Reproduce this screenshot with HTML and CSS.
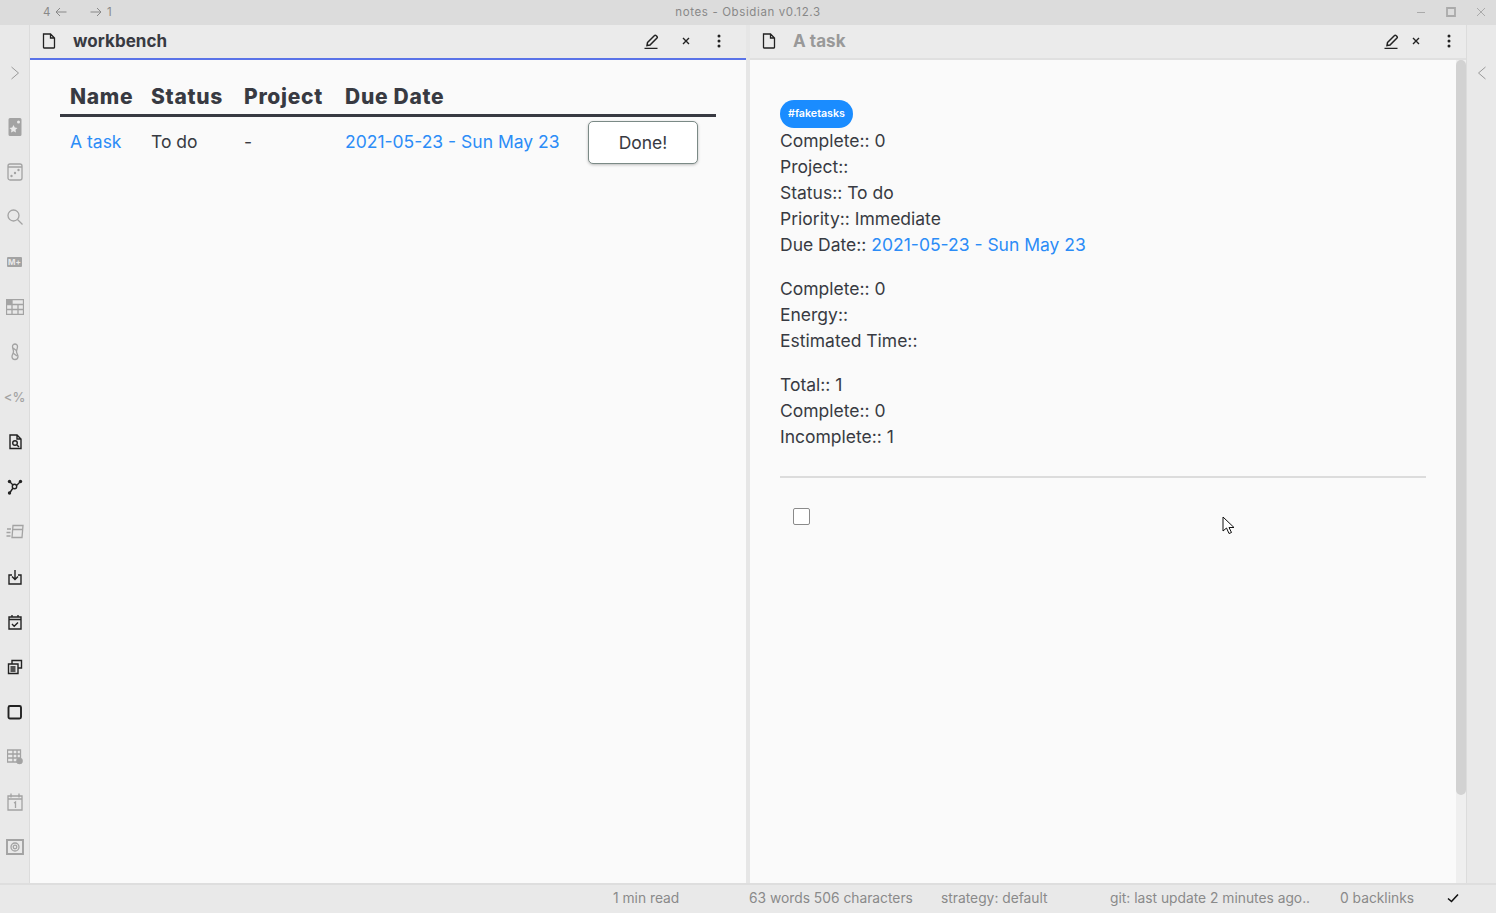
FILE: index.html
```html
<!DOCTYPE html>
<html lang="en">
<head>
<meta charset="utf-8">
<title>notes - Obsidian v0.12.3</title>
<link rel="stylesheet" href="styles.css">
</head>
<body>
<div class="app">
  <header class="titlebar">
    <div class="nav">
      <span class="nav-back">4 <svg class="nav-arrow" viewBox="0 0 12 10"><path d="M11.500 5H1M5 1L1 5l4 4"/></svg></span>
      <span class="nav-fwd"><svg class="nav-arrow" viewBox="0 0 12 10"><path d="M.5 5H11M7 1l4 4-4 4"/></svg> 1</span>
    </div>
    <div class="title">notes - Obsidian v0.12.3</div>
    <div class="win">
      <svg viewBox="0 0 10 10"><path d="M1 5.500h8"/></svg>
      <svg viewBox="0 0 10 10"><path class="thick" d="M1 1h8v8H1z"/></svg>
      <svg viewBox="0 0 10 10"><path d="M1 1l8 8M9 1L1 9"/></svg>
    </div>
  </header>
  <div class="main">
    <nav class="ribbon">
      <svg class="chev" viewBox="0 0 10 14"><path d="M1.500 1l7 6-7 6"/></svg>
      <div class="ribbon-icons">
        <svg class="ri tall g" viewBox="0 0 16 18"><path class="fill" d="M3 0h10a1.500 1.500 0 0 1 1.500 1.500v15A1.500 1.500 0 0 1 13 18H3a1.500 1.500 0 0 1-1.500-1.500v-15A1.500 1.500 0 0 1 3 0z"/><circle cx="11.500" cy="4" r="1.500" fill="#e9e9e9" stroke="none"/><path fill="#e9e9e9" stroke="none" d="M6.500 7l1.300 2.500 2.700.4-2 1.900.5 2.700-2.500-1.300L4 14.500l.5-2.700-2-1.900 2.700-.4z"/></svg>
        <svg class="ri tall g" viewBox="0 0 16 18"><path d="M3 1h10a2 2 0 0 1 2 2v12a2 2 0 0 1-2 2H3a2 2 0 0 1-2-2V3a2 2 0 0 1 2-2zM1 4h14"/><circle class="fill" cx="4.500" cy="13" r="1.200"/><circle class="fill" cx="8" cy="10" r="1.200"/><circle class="fill" cx="11.500" cy="7" r="1.200"/></svg>
        <svg class="ri g" viewBox="0 0 16 16"><circle cx="6.500" cy="6.500" r="5.500"/><path d="M10.500 10.500l5 5"/></svg>
        <span class="ri-chip">M+</span>
        <svg class="ri wide g" viewBox="0 0 18 16"><path d="M.5.500h17v15H.5zM.5 5.500h17M.5 10.500h17M6 .5v15M12 5.500v10"/><path class="fill" d="M.5.500H6v5H.5z"/></svg>
        <svg class="ri tall g" viewBox="0 0 16 18"><path d="M8 1a2.500 2.500 0 0 1 2.500 2.500c0 2-1 3.500-1 5 0 2 1.500 3 1.500 5a3 3 0 0 1-6 0c0-2 1.500-3 1.500-5 0-1.500-1-3-1-5A2.500 2.500 0 0 1 8 1zM6 5l4 3M6 10l4 3"/></svg>
        <span class="ri-text">&lt;%</span>
        <svg class="ri k" viewBox="0 0 16 16"><path d="M3 1h7l4 4v9.500H3zM10 1v4h4"/><circle cx="8" cy="9" r="2.300"/><path d="M10 11l2 2"/></svg>
        <svg class="ri k" viewBox="0 0 16 16"><circle class="fill" cx="2.500" cy="2.500" r="1.700"/><circle class="fill" cx="13.500" cy="2.500" r="1.700"/><circle class="fill" cx="2.500" cy="14" r="1.700"/><circle cx="7.500" cy="7.500" r="2.200"/><path d="M3 3l3 3M13 3L9.500 6.500M3 13.500L6 9"/></svg>
        <svg class="ri wide g" viewBox="0 0 18 16"><path d="M7 1.500h10l-1 12H6zM6.500 5.500h10M1 5h4M.5 8.500h4M.5 12h4"/></svg>
        <svg class="ri k" viewBox="0 0 16 16"><path d="M5 6H2v9h12V6h-3M8 1v9M5 7.500l3 3 3-3"/></svg>
        <svg class="ri k" viewBox="0 0 16 16"><path d="M2 3h12v12H2zM2 5.500h12M5 1v2.500M11 1v2.500M5 10l2.200 2.200L11 8.500"/></svg>
        <svg class="ri k" viewBox="0 0 16 16"><path d="M5 5V1.500h9.500V9H11M1.500 5H11v9.500H1.500zM3.500 8h5M3.500 10h5M3.500 12h5"/></svg>
        <svg class="ri k" viewBox="0 0 16 16"><rect class="thick" x="1.500" y="2" width="12.500" height="12.500" rx="1.500"/></svg>
        <svg class="ri g" viewBox="0 0 16 16"><path d="M.5 1h13v12H.5zM.5 5h13M.5 9h13M6 1v12M10 1v8"/><circle class="fill" cx="12.500" cy="12" r="3.300"/></svg>
        <svg class="ri tall g" viewBox="0 0 16 18"><path d="M1 3h14v14H1zM1 6h14M4 .5v4M12 .5v4M7 10l1.500-1v6"/></svg>
        <svg class="ri wide g" viewBox="0 0 18 16"><path class="thick" d="M1 1h16v14H1z"/><circle cx="9" cy="8" r="4"/><circle cx="9" cy="8" r="1.800"/></svg>
      </div>
    </nav>
    <div class="workspace">
      <section class="pane">
        <div class="tabhead active">
          <svg class="file" viewBox="0 0 14 16"><path d="M1.500 1h7l4 4v9.500a.5.5 0 0 1-.5.500H2a.5.5 0 0 1-.5-.5zM8.500 1v4h4"/></svg>
          <span class="tabname">workbench</span>
          <span class="spring"></span>
          <svg class="act pencil" viewBox="0 0 16 16"><path d="M3.500 9.500l7-7a1 1 0 0 1 1.500 0l1 1a1 1 0 0 1 0 1.500l-7 7-3 .5zM.5 15.500h13"/></svg>
          <svg class="act cross" viewBox="0 0 8 8"><path d="M1 1l6 6M7 1L1 7"/></svg>
          <svg class="act dots" viewBox="0 0 4 14"><circle cx="2" cy="2" r="1.500"/><circle cx="2" cy="7" r="1.500"/><circle cx="2" cy="12" r="1.500"/></svg>
        </div>
        <div class="content left">
          <table class="tasks">
            <thead>
              <tr><th class="c1">Name</th><th class="c2">Status</th><th class="c3">Project</th><th class="c4">Due Date</th><th class="c5"></th></tr>
            </thead>
            <tbody>
              <tr>
                <td><a class="link">A task</a></td>
                <td>To do</td>
                <td>-</td>
                <td><a class="link">2021-05-23 - Sun May 23</a></td>
                <td><button class="done">Done!</button></td>
              </tr>
            </tbody>
          </table>
        </div>
      </section>
      <div class="divider"></div>
      <section class="pane right-pane">
        <div class="tabhead">
          <svg class="file" viewBox="0 0 14 16"><path d="M1.500 1h7l4 4v9.500a.5.5 0 0 1-.5.500H2a.5.5 0 0 1-.5-.5zM8.500 1v4h4"/></svg>
          <span class="tabname dim">A task</span>
          <span class="spring"></span>
          <svg class="act pencil" viewBox="0 0 16 16"><path d="M3.500 9.500l7-7a1 1 0 0 1 1.500 0l1 1a1 1 0 0 1 0 1.500l-7 7-3 .5zM.5 15.500h13"/></svg>
          <svg class="act cross" viewBox="0 0 8 8"><path d="M1 1l6 6M7 1L1 7"/></svg>
          <svg class="act dots" viewBox="0 0 4 14"><circle cx="2" cy="2" r="1.500"/><circle cx="2" cy="7" r="1.500"/><circle cx="2" cy="12" r="1.500"/></svg>
        </div>
        <div class="scrollwrap">
          <div class="content preview">
            <p><span class="tag">#faketasks</span><br>Complete:: 0<br>Project::<br>Status:: To do<br>Priority:: Immediate<br>Due Date:: <a class="link">2021-05-23 - Sun May 23</a></p>
            <p>Complete:: 0<br>Energy::<br>Estimated Time::</p>
            <p>Total:: 1<br>Complete:: 0<br>Incomplete:: 1</p>
            <hr class="rule">
            <div class="check"></div>
          </div>
          <div class="scrollbar"><div class="thumb"></div></div>
        </div>
        <svg class="cursor" viewBox="0 0 13 19"><path d="M1 1v14l3.500-3 2.500 5.500 2.500-1L7 11.500h5z"/></svg>
      </section>
    </div>
    <nav class="ribbon end">
      <svg class="chev" viewBox="0 0 10 14"><path d="M8.500 1l-7 6 7 6"/></svg>
    </nav>
  </div>
  <footer class="status">
    <span class="s1">1 min read</span>
    <span class="s2">63 words 506 characters</span>
    <span class="s3">strategy: default</span>
    <span class="s4">git: last update 2 minutes ago..</span>
    <span class="s5">0 backlinks</span>
    <svg class="tick" viewBox="0 0 12 10"><path d="M1 5.500l3.500 3L11 1.500"/></svg>
  </footer>
</div>
</body>
</html>
```
FILE: styles.css
```css
* { box-sizing: border-box; }
html, body { margin: 0; height: 100%; overflow: hidden; }
body { font-family: "Inter", "Noto Sans", sans-serif; color: #383a42; background: #e9e9e9; }
svg { display: block; fill: none; stroke: currentColor; stroke-width: 1; }
svg .fill { fill: currentColor; stroke: none; }

.app { height: 913px; display: flex; flex-direction: column; }

.titlebar { height: 25px; flex: none; background: #dcdcdc; display: flex; align-items: center; position: relative; color: #888; font-size: 11.500px; padding-bottom: 1px; }
.nav { display: flex; margin-left: 43px; gap: 22px; }
.nav span { display: flex; align-items: center; gap: 5px; width: 24px; white-space: nowrap; }
.nav-arrow { width: 12px; height: 10px; flex: none; }
.nav-fwd { margin-left: 1px; }
.title { position: absolute; left: 0; right: 0; text-align: center; letter-spacing: .62px; top: 5px; }
.win { margin-left: auto; display: flex; gap: 20px; margin-right: 10px; color: #aaa; }
.win svg { width: 10px; height: 10px; }
.win .thick { stroke-width: 1.800; }

.main { flex: 1; display: flex; min-height: 0; }
.ribbon { width: 30px; flex: none; background: #e9e9e9; border-right: 1px solid #dcdcdc; display: flex; flex-direction: column; align-items: center; padding-top: 41px; }
.ribbon.end { border-right: 0; border-left: 1px solid #dcdcdc; }
.chev { width: 10px; height: 14px; color: #999; flex: none; }
.ribbon-icons { display: grid; grid-auto-rows: 45px; justify-items: center; align-items: center; margin-top: 24px; }
.ri { width: 16px; height: 16px; }
.ri.wide { width: 18px; }
.ri.tall { height: 18px; }
.ri.g { color: #a3a3a3; stroke-width: 1.300; }
.ri.k { color: #222; stroke-width: 1.400; }
.ri .thick { stroke-width: 1.900; }
.ri-text { color: #a3a3a3; font-size: 13px; font-weight: 500; }
.ri-chip { width: 15px; height: 10px; background: #a3a3a3; color: #e9e9e9; border-radius: 1px; font-size: 8px; line-height: 10px; font-weight: 700; text-align: center; }

.workspace { flex: 1; display: flex; min-width: 0; }
.pane { flex: 1; min-width: 0; display: flex; flex-direction: column; position: relative; background: #fafafa; }
.divider { width: 4px; background: #e6e6e6; flex: none; }
.tabhead { height: 35px; flex: none; background: #ebebeb; border-bottom: 2px solid #e0e0e0; display: flex; align-items: center; padding: 0 0 1px 12px; color: #222; }
.tabhead.active { border-bottom-color: #5a73e8; }
.file { width: 14px; height: 16px; flex: none; stroke-width: 1.300; }
.tabname { margin-left: 17px; font-size: 17px; font-weight: 700; color: #383a42; letter-spacing: .05px; }
.tabname.dim { color: #999; }
.spring { flex: 1; }
.act { flex: none; }
.pencil { width: 16px; height: 16px; stroke-width: 1.500; }
.cross { width: 8px; height: 8px; stroke-width: 1.400; margin-left: 22px; }
.dots { width: 4px; height: 14px; fill: currentColor; stroke: none; margin-left: 27px; margin-right: 25px; }
.right-pane .pencil { margin-right: -1px; }
.right-pane .cross { margin-left: 13px; }
.right-pane .dots { margin-left: 27px; margin-right: 15px; }

.content { flex: 1; min-height: 0; }
.left { padding: 20px 30px; }
.tasks { width: 656px; border-collapse: collapse; font-size: 17.500px; table-layout: fixed; }
.tasks th { font-size: 21px; font-weight: 800; text-align: left; padding: 0 10px; height: 35px; border-bottom: 3px solid #383a42; white-space: nowrap; letter-spacing: .7px; }
.tasks td { padding: 0 10px; line-height: 50px; vertical-align: top; white-space: nowrap; }
.tasks .c1 { width: 81px; }
.tasks .c2 { width: 93px; }
.tasks .c3 { width: 101px; }
.tasks .c4 { width: 243px; }
.link { color: #2b8cf7; text-decoration: none; }
.done { display: block; margin: 4px 0 0; width: 110px; height: 43px; background: #fff; border: 1px solid #7b8a86; border-radius: 5px; box-shadow: 0 1px 3px rgba(0,0,0,.25); font: 17.500px "Inter", sans-serif; color: #383a42; }

.scrollwrap { flex: 1; min-height: 0; display: flex; }
.preview { flex: 1; padding: 40px 30px 0; font-size: 17.500px; line-height: 26px; }
.preview p { margin: 0 0 18px; }
.tag { display: inline-block; vertical-align: top; height: 28px; line-height: 27px; background: #1a8cff; color: #fff; font-size: 10.700px; font-weight: 600; padding: 0 8px; border-radius: 14px; }
.rule { border: 0; height: 2px; background: #dcdcdc; margin: 26px 0 0; }
.check { width: 17px; height: 17px; margin: 30px 0 0 13px; border: 1px solid #8a8a8a; border-radius: 2px; background: #fff; }
.scrollbar { width: 10px; flex: none; background: #efefef; margin-left: auto; }
.thumb { height: 735px; background: #d2d2d2; border-radius: 5px; }
.cursor { position: absolute; left: 472px; top: 491px; width: 13px; height: 19px; fill: #fff; stroke: #111; }

.status { height: 30px; flex: none; background: #e9e9e9; border-top: 2px solid #dedede; display: flex; align-items: center; font-size: 13.800px; color: #8a8a8a; padding: 0 0 3px 613px; }
.s1 { width: 136px; }
.s2 { width: 192px; }
.s3 { width: 169px; }
.s4 { width: 231px; margin-right: -1px; }
.s5 { width: 107px; }
.tick { width: 12px; height: 10px; color: #111; stroke-width: 1.600; }
```
